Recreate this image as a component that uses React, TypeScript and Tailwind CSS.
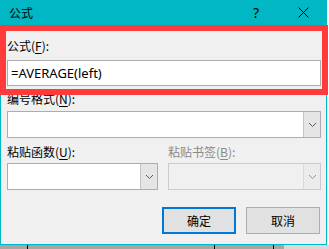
import React from "react";

const cjk = { fontFamily: '"Noto Sans CJK SC", "Noto Sans", sans-serif' };

function Chevron() {
  return (
    <svg width="9" height="6" viewBox="0 0 9 6">
      <path d="M1 1 L4.5 4.5 L8 1" fill="none" stroke="#5a5a5a" strokeWidth="1" />
    </svg>
  );
}

function Combo({ width, disabled }: { width: string; disabled?: boolean }) {
  return (
    <div
      className={
        disabled
          ? `${width} flex h-[27px] border border-[#cccccc] bg-[#f0f0f0]`
          : `${width} flex h-[27px] border border-[#adadad] bg-white`
      }
    >
      <div className="flex-1" />
      <div
        className={
          disabled
            ? "flex w-[17px] items-center justify-center border-l border-[#cccccc] bg-[#ebebeb] opacity-60"
            : "flex w-[17px] items-center justify-center border-l border-[#c4c4c4] bg-[#e5e5e5]"
        }
      >
        <Chevron />
      </div>
    </div>
  );
}

function Label({ text, hot, rest, disabled }: { text: string; hot: string; rest: string; disabled?: boolean }) {
  return (
    <div
      className={disabled ? "h-[14px] text-[12px] leading-[14px] text-[#8a8a8a]" : "h-[14px] text-[12px] leading-[14px] text-black"}
      style={cjk}
    >
      {text}(<span className="underline underline-offset-2">{hot}</span>){rest}
    </div>
  );
}

export default function App() {
  return (
    <div className="relative h-[249px] w-[329px] overflow-hidden bg-white" style={cjk}>
      <div className="flex h-[245px] w-[327px] flex-col border-x border-b border-[#00b7c3] bg-[#f0f0f0]">
        {/* Title bar */}
        <div className="-mx-px flex h-[25px] items-center bg-[#00b7c3]">
          <span className="ml-[9px] text-[12px] leading-none text-black" style={cjk}>公式</span>
          <span
            className="ml-auto mr-[39px] text-[14px] leading-none text-black"
            style={{ fontFamily: '"Noto Sans", sans-serif' }}
          >
            ?
          </span>
          <svg width="11" height="11" viewBox="0 0 11 11" className="mr-[18px]">
            <path d="M0.5 0.5 L10.5 10.5 M10.5 0.5 L0.5 10.5" stroke="#000" strokeWidth="1" />
          </svg>
        </div>

        {/* Body */}
        <div className="flex flex-col pl-[6px] pt-[14px]">
          <Label text="公式" hot="F" rest=":" />
          <div className="mt-[7px] flex h-[26px] w-[314px] items-center border border-[#adadad] bg-white pl-[3px]">
            <span
              className="text-[13px] leading-none text-black"
              style={{ fontFamily: '"Noto Sans", "Open Sans", sans-serif' }}
            >
              =AVERAGE(left)
            </span>
          </div>

          <div className="mt-[6px]">
            <Label text="编号格式" hot="N" rest=":" />
          </div>
          <div className="mt-[5px]">
            <Combo width="w-[314px]" />
          </div>

          <div className="mt-[7px] flex">
            <div className="w-[161px]">
              <Label text="粘贴函数" hot="U" rest=":" />
            </div>
            <Label text="粘贴书签" hot="B" rest=":" disabled />
          </div>
          <div className="mt-[4px] flex">
            <Combo width="w-[151px]" />
            <div className="ml-[10px]">
              <Combo width="w-[153px]" disabled />
            </div>
          </div>

          <div className="mt-[17px] flex w-[314px] justify-end gap-[10px]">
            <button
              className="flex h-[27px] w-[74px] items-center justify-center border-2 border-[#0078d7] bg-[#e1e1e1] text-[12px] text-black"
              style={cjk}
            >
              确定
            </button>
            <button
              className="mr-px flex h-[27px] w-[74px] items-center justify-center border border-[#adadad] bg-[#e1e1e1] text-[12px] text-black"
              style={cjk}
            >
              取消
            </button>
          </div>
        </div>
      </div>

      {/* Document underneath */}
      <div className="flex h-[4px] w-[329px]">
        <div className="w-[27px] bg-[#a6a6a6]" />
        <div className="w-px bg-black" />
        <div className="w-[186px] bg-[#a6a6a6]" />
        <div className="w-px bg-black" />
        <div className="w-[58px] bg-[#a6a6a6]" />
        <div className="w-px bg-black" />
        <div className="w-[10px] bg-[#a6a6a6]" />
        <div className="flex-1 bg-[#d9d9d9]" />
      </div>

      {/* Red annotation frame */}
      <div className="pointer-events-none absolute left-0 top-[25px] h-[70px] w-[328px] border-[6px] border-[#ff3b3b]" />
    </div>
  );
}
